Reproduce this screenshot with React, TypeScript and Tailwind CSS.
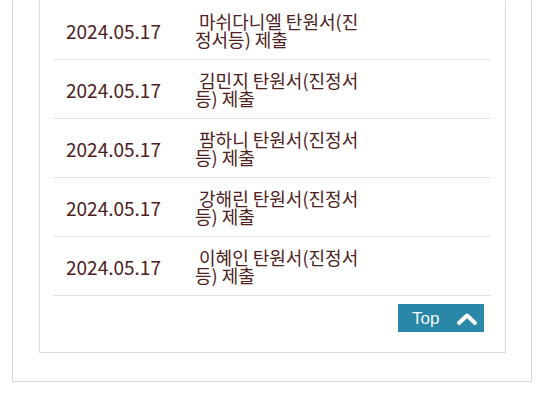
import React from "react";

const rows = [
  { date: "2024.05.17", title: "마쉬다니엘 탄원서(진정서등) 제출" },
  { date: "2024.05.17", title: "김민지 탄원서(진정서등) 제출" },
  { date: "2024.05.17", title: "팜하니 탄원서(진정서등) 제출" },
  { date: "2024.05.17", title: "강해린 탄원서(진정서등) 제출" },
  { date: "2024.05.17", title: "이혜인 탄원서(진정서등) 제출" },
];

const font = {
  fontFamily: '"Noto Sans CJK KR", "Noto Sans", sans-serif',
};

function App() {
  return (
    <div className="w-[540px] h-[400px] bg-white overflow-hidden" style={font}>
      <div className="ml-[12px] w-[520px] border-x border-b border-[#d6d6d6] pl-[26px] pb-[28px]">
        <div className="w-[467px] border-x border-b border-[#dcdcdc] pl-[13px] pb-[20px]">
          <div className="w-[438px] mt-[1px]">
            {rows.map((row, i) => (
              <div
                key={i}
                className="h-[59px] border-b border-[#e2e2e2] flex items-center text-[#4e2020]"
              >
                <div className="w-[142px] pl-[13px] text-[19px] leading-none">
                  {row.date}
                </div>
                <div className="w-[175px] text-[18px] leading-[18px]">
                  {"\u00a0" + row.title}
                </div>
              </div>
            ))}
          </div>
          <div className="w-[438px] flex justify-end pr-[7px] mt-[8px]">
            <div className="w-[86px] h-[28px] bg-[#2a87a7] flex items-center pl-[14px] text-[#f4f8fa]">
              <span
                className="text-[17px] leading-none"
                style={{ fontFamily: '"Liberation Sans", Arial, sans-serif' }}
              >
                Top
              </span>
              <svg
                className="ml-[17px] mt-[1px]"
                width="22"
                height="14"
                viewBox="0 0 22 14"
                fill="none"
              >
                <polyline
                  points="3,11 11,3.5 19,11"
                  stroke="white"
                  strokeWidth="4"
                  strokeLinecap="round"
                  strokeLinejoin="round"
                />
              </svg>
            </div>
          </div>
        </div>
      </div>
    </div>
  );
}

export default App;
